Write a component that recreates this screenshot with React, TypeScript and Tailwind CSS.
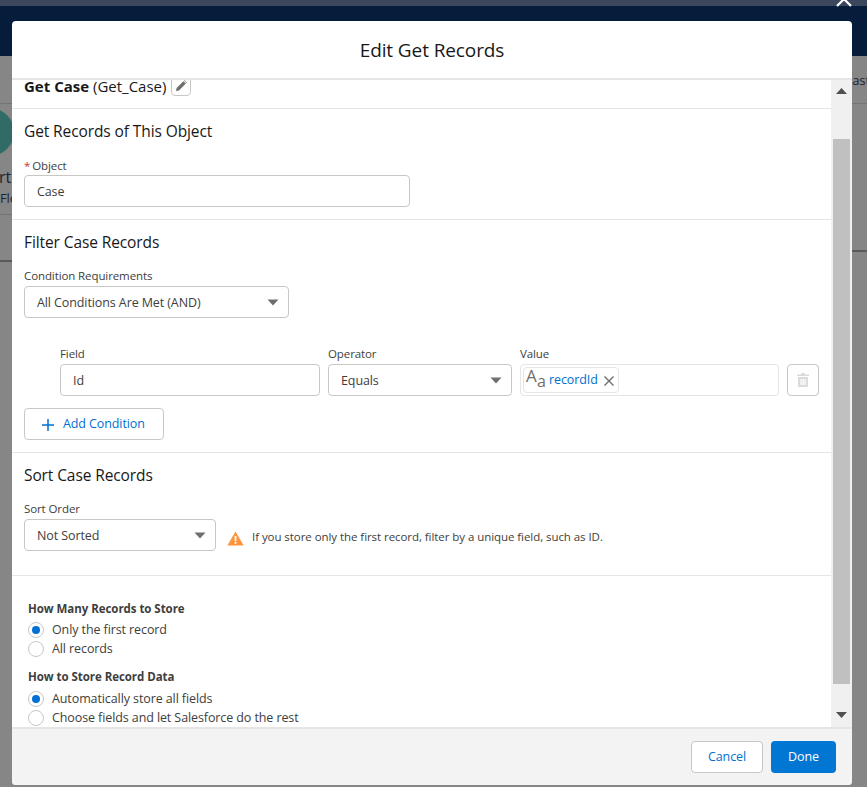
import React from "react";

const Caret = () => (
  <svg width="12" height="7" viewBox="0 0 12 7" className="shrink-0">
    <path d="M0.5 0.5h11L6 6.5z" fill="#706e6b" />
  </svg>
);

const Select = ({ label, className }: { label: string; className: string }) => (
  <div className={`h-[32px] bg-white border border-[#c9c7c5] rounded-[4px] pl-[12px] pr-[9px] flex items-center justify-between text-[#3e3e3c] ${className}`}>
    <span className="mt-[2px]">{label}</span>
    <Caret />
  </div>
);

const Radio = ({ label, checked }: { label: string; checked?: boolean }) => (
  <div className="h-[19px] flex items-center gap-[8px] text-[#3e3e3c]">
    <span className="w-[16px] h-[16px] rounded-full border border-[#c9c7c5] bg-white flex items-center justify-center shrink-0">
      {checked && <span className="w-[8px] h-[8px] rounded-full bg-[#0070d2]" />}
    </span>
    <span className="mt-[1px]">{label}</span>
  </div>
);

const SectionTitle = ({ children }: { children: React.ReactNode }) => (
  <h2 className="text-[15.5px] tracking-[-0.1px] leading-[22px] text-[#181818]">{children}</h2>
);

const Label = ({ children }: { children: React.ReactNode }) => (
  <div className="text-[11.5px] tracking-[-0.1px] leading-[16px] text-[#3e3e3c]">{children}</div>
);

export default function App() {
  return (
    <div className="relative w-[867px] h-[787px] overflow-hidden bg-[#868686] font-['Open_Sans',sans-serif] text-[12.5px] tracking-[-0.1px]">
      {/* page behind the modal */}
      <div className="h-[6px] bg-[#3a475c]" />
      <div className="h-[50px] bg-[#051c3a]" />
      <div className="h-[48px] border-b border-[#747474] flex justify-end items-center text-[13px] text-[#1a2433]">
        <span className="mr-[-3px] mt-[3px]">ast</span>
      </div>
      <div className="w-[48px] h-[48px] ml-[-34px] mt-[4px] rounded-full bg-[#316b66]" />

      <button className="absolute left-[836px] top-[-9px] text-white">
        <svg width="16" height="16" viewBox="0 0 16 16">
          <path d="M1 1l14 14M15 1L1 15" stroke="#fff" strokeWidth="2.2" />
        </svg>
      </button>
      <div className="absolute left-[-1px] top-[165px] text-[16px] text-[#1a2433]">rt</div>
      <div className="absolute left-0 top-[189px] text-[13px] text-[#1a2433]">Flo</div>
      <div className="absolute left-0 top-[214px] w-[12px] h-px bg-[#747474]" />
      <div className="absolute left-0 top-[260px] w-[12px] h-[2px] bg-[#5a5a5a]" />
      <div className="absolute left-[852px] top-[250px] w-[15px] h-[2px] bg-[#5a5a5a]" />

      {/* modal */}
      <div className="absolute left-[12px] top-[21px] w-[840px] h-[764px] flex flex-col rounded-[4px] overflow-hidden bg-white">
        <header className="h-[59px] shrink-0 border-b-2 border-[#e5e5e5] flex items-center justify-center pt-[1px] text-[19px] text-[#181818]">
          Edit Get Records
        </header>

        <div className="flex-1 min-h-0 flex">
          <div className="flex-1 min-w-0 overflow-hidden">
            <section className="h-[29px] border-b border-[#e5e5e5] pl-[12px] flex items-start gap-[5px] text-[15px] tracking-normal leading-[12px] text-[#181818] overflow-hidden">
              <span>
                <b className="font-bold">Get Case</b> (Get_Case)
              </span>
              <span className="w-[20px] h-[22px] mt-[-6px] border border-[#c9c7c5] rounded-[4px] flex items-center justify-center shrink-0">
                <svg width="12" height="12" viewBox="0 0 12 12" className="mt-[2px]">
                  <path d="M1 11l.6-3L8.4 1.2l2.4 2.4L4 10.4zM9 .6l.6-.4 2.2 2.2-.4.6z" fill="#706e6b" />
                </svg>
              </span>
            </section>

            <section className="h-[111px] border-b border-[#e5e5e5] pl-[12px] pt-[11px]">
              <SectionTitle>Get Records of This Object</SectionTitle>
              <div className="mt-[16px]">
                <Label>
                  <span className="text-[#c23934] mr-[2px]">*</span>Object
                </Label>
              </div>
              <div className="mt-[1px] w-[386px] h-[32px] border border-[#c9c7c5] rounded-[4px] pl-[12px] pt-[2px] flex items-center text-[#3e3e3c]">Case</div>
            </section>

            <section className="h-[233px] border-b border-[#e5e5e5] pl-[12px] pt-[11px]">
              <SectionTitle>Filter Case Records</SectionTitle>
              <div className="mt-[15px]">
                <Label>Condition Requirements</Label>
              </div>
              <Select label="All Conditions Are Met (AND)" className="mt-[2px] w-[265px]" />

              <div className="mt-[28px] pl-[36px] flex items-end">
                <div className="w-[260px]">
                  <Label>Field</Label>
                  <div className="mt-[2px] h-[32px] border border-[#c9c7c5] rounded-[4px] pl-[12px] pt-[2px] flex items-center text-[#3e3e3c]">Id</div>
                </div>
                <div className="w-[184px] ml-[8px]">
                  <Label>Operator</Label>
                  <Select label="Equals" className="mt-[2px]" />
                </div>
                <div className="w-[259px] ml-[8px]">
                  <Label>Value</Label>
                  <div className="mt-[2px] h-[32px] border border-[#e5e5e5] rounded-[4px] pl-[2px] flex items-center">
                    <div className="h-[26px] w-[96px] border border-[#e5e5e5] rounded-[4px] flex items-center pl-[2px]">
                      <span className="w-[22px] relative h-[22px] text-[#706e6b] shrink-0">
                        <span className="absolute left-0 top-[-4px] text-[17px] leading-[22px]">A</span>
                        <span className="absolute left-[11px] top-[1px] text-[16px] leading-[22px]">a</span>
                      </span>
                      <span className="ml-[1px] mt-[1px] text-[#0070d2]">recordId</span>
                      <svg width="12" height="12" viewBox="0 0 12 12" className="ml-[5px] mt-[1px]">
                        <path d="M1.5 1.5l9 9M10.5 1.5l-9 9" stroke="#706e6b" strokeWidth="1.4" />
                      </svg>
                    </div>
                  </div>
                </div>
                <div className="ml-[8px] w-[32px] h-[32px] border border-[#c9c7c5] rounded-[4px] flex items-center justify-center">
                  <svg width="12" height="14" viewBox="0 0 12 14">
                    <path d="M4.5 0h3l.6 1.5H12V3H0V1.5h3.9zM1 4h10v10H1zM3.5 6v6h1.2V6zm2 0v6h1.2V6zm2 0v6h1.2V6z" fill="#dddbda" fillRule="evenodd" />
                  </svg>
                </div>
              </div>

              <button className="mt-[12px] w-[140px] h-[32px] border border-[#c9c7c5] rounded-[4px] flex items-center gap-[9px] pl-[17px] pt-[1px] text-[#0070d2]">
                <svg width="12" height="12" viewBox="0 0 12 12" className="mt-[1px]">
                  <path d="M6 0v12M0 6h12" stroke="#0070d2" strokeWidth="1.5" />
                </svg>
                Add Condition
              </button>
            </section>

            <section className="h-[123px] border-b border-[#e5e5e5] pl-[12px] pt-[11px]">
              <SectionTitle>Sort Case Records</SectionTitle>
              <div className="mt-[15px]">
                <Label>Sort Order</Label>
              </div>
              <div className="mt-[2px] flex items-center">
                <Select label="Not Sorted" className="w-[192px]" />
                <svg width="17" height="15" viewBox="0 0 17 15" className="ml-[11px] mt-[6px]">
                  <path d="M8.5 0.5L16.6 14.5H0.4z" fill="#fe9339" />
                  <rect x="7.6" y="5" width="1.8" height="5.2" fill="#fff" />
                  <rect x="7.6" y="11" width="1.8" height="1.8" fill="#fff" />
                </svg>
                <span className="ml-[8px] mt-[4px] text-[11.5px] tracking-[-0.06px] text-[#3e3e3c]">If you store only the first record, filter by a unique field, such as ID.</span>
              </div>
            </section>

            <section className="pl-[16px] pt-[25px] text-[#3e3e3c]">
              <div className="text-[11.5px] tracking-[-0.05px] leading-[16px] font-bold">How Many Records to Store</div>
              <div className="mt-[3px]">
                <Radio label="Only the first record" checked />
                <Radio label="All records" />
              </div>
              <div className="mt-[11px] text-[11.5px] tracking-[-0.05px] leading-[16px] font-bold">How to Store Record Data</div>
              <div className="mt-[4px]">
                <Radio label="Automatically store all fields" checked />
                <Radio label="Choose fields and let Salesforce do the rest" />
              </div>
            </section>
          </div>

          {/* scrollbar */}
          <div className="w-[21px] shrink-0 bg-[#f0f0f0] flex flex-col items-center">
            <svg width="11" height="6" viewBox="0 0 11 6" className="mt-[8px]">
              <path d="M5.5 0L11 6H0z" fill="#505050" />
            </svg>
            <div className="mt-[45px] w-[17px] h-[545px] bg-[#c0c0c0]" />
            <svg width="11" height="6" viewBox="0 0 11 6" className="mt-[28px]">
              <path d="M0 0h11L5.5 6z" fill="#505050" />
            </svg>
          </div>
        </div>

        <footer className="h-[58px] shrink-0 border-t-2 border-[#e5e5e5] bg-[#f3f3f3] flex items-center justify-end gap-[8px] pr-[16px]">
          <button className="w-[72px] h-[32px] bg-white border border-[#c9c7c5] rounded-[4px] text-[#0070d2]">Cancel</button>
          <button className="w-[65px] h-[32px] bg-[#0176d3] rounded-[4px] text-white">Done</button>
        </footer>
      </div>
    </div>
  );
}
